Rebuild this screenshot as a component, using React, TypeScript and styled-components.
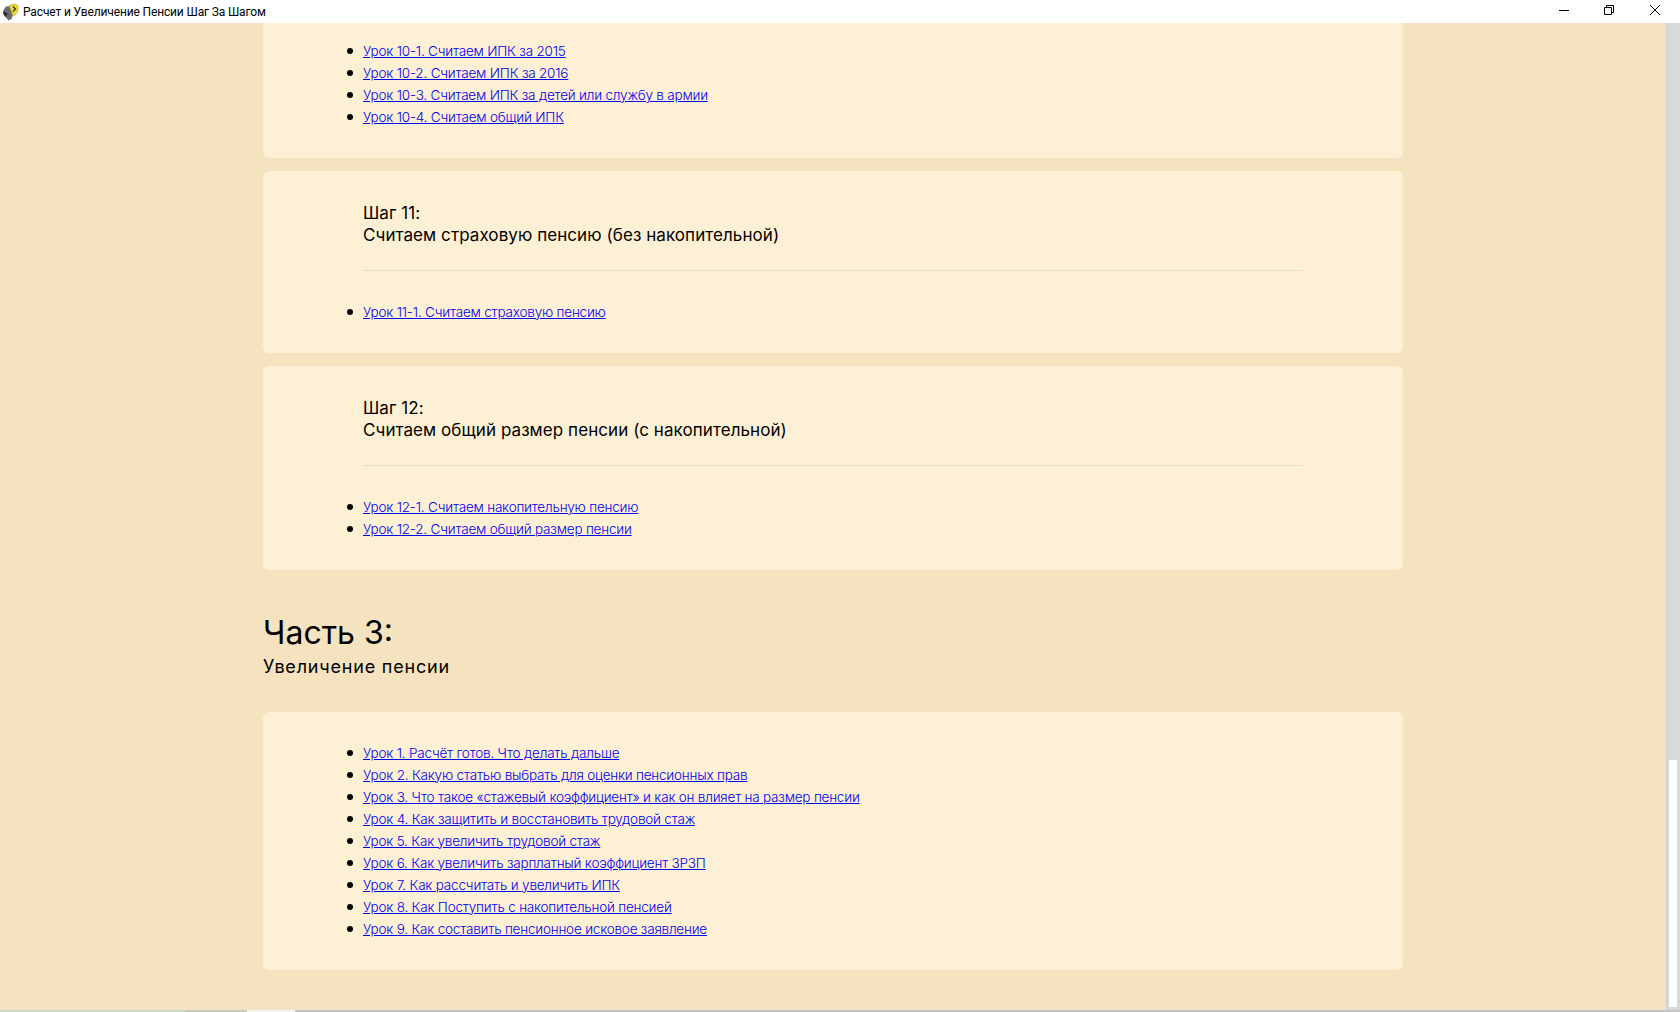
import React from "react";
import styled, { createGlobalStyle } from "styled-components";

const GlobalStyle = createGlobalStyle`
  html, body {
    margin: 0;
    padding: 0;
    height: 100%;
    overflow: hidden;
    background: #f5e3bf;
  }
`;

const Page = styled.div`
  width: 1680px;
  height: 1012px;
  display: flex;
  flex-direction: column;
  overflow: hidden;
  font-family: Inter, "Noto Sans", sans-serif;
`;

const TitleBar = styled.div`
  height: 23px;
  flex: none;
  background: #fff;
  display: flex;
  align-items: center;
  padding-left: 2px;
`;

const AppIcon = styled.svg`
  width: 17px;
  height: 19px;
  flex: none;
`;

const WindowTitle = styled.span`
  margin-left: 4px;
  flex: 1;
  font: 12px/20px Roboto, sans-serif;
  letter-spacing: -0.14px;
  color: #000;
  white-space: nowrap;
`;

const WindowButton = styled.svg<{ $gap: number }>`
  width: 10px;
  height: 10px;
  flex: none;
  margin-right: ${(p) => p.$gap}px;
  margin-top: -3px;
`;

const Middle = styled.div`
  flex: 1;
  min-height: 0;
  display: flex;
`;

const Content = styled.main`
  flex: 1;
  min-width: 0;
  padding-left: 263px;
`;

const Scrollbar = styled.div`
  width: 14px;
  flex: none;
  box-sizing: border-box;
  background: #d9d9d9;
  border-left: 2px solid #d0d3e0;
  padding: 737px 3px 3px 1px;
  display: flex;
`;

const Thumb = styled.div`
  flex: 1;
  background: #fff;
`;

const Card = styled.section`
  width: 1140px;
  box-sizing: border-box;
  background: #fef0d5;
  border-radius: 6px;
  padding: 0 100px;
  margin-bottom: 13px;
`;

const TopCard = styled(Card)`
  border-radius: 0 0 6px 6px;
  height: 135px;
  padding-top: 17px;
`;

const StepTitle = styled.h3`
  margin: 0;
  padding: 31px 0 24px;
  font-size: 17px;
  line-height: 22px;
  font-weight: 400;
  letter-spacing: 0.07px;
  color: #000;
  border-bottom: 1px solid #e8dfc9;
`;

const Lessons = styled.ul`
  margin: 0;
  padding: 30px 0 30px;
  list-style: none;
`;

const TopLessons = styled(Lessons)`
  padding: 0;
`;

const PlainLessons = styled(Lessons)`
  padding: 30px 0 30px;
`;

const Lesson = styled.li`
  position: relative;
  font-size: 13.5px;
  font-weight: 300;
  letter-spacing: -0.2px;
  line-height: 22px;
  &::before {
    content: "";
    position: absolute;
    left: -16px;
    top: 8px;
    width: 6px;
    height: 6px;
    border-radius: 50%;
    background: #000;
  }
  a {
    color: #0000ee;
    text-decoration: underline;
  }
`;

const PartHeader = styled.header`
  padding-top: 29px;
  padding-bottom: 32px;
`;

const PartTitle = styled.h2`
  margin: 0;
  font-size: 32px;
  line-height: 42px;
  font-weight: 400;
  color: #000;
`;

const PartSubtitle = styled.p`
  margin: 0;
  font-size: 18px;
  line-height: 26px;
  letter-spacing: 0.8px;
  color: #000;
`;

const Wallpaper = styled.div`
  height: 2px;
  flex: none;
  display: grid;
  grid-template-columns: 185px 62px 48px 1fr;
`;

const WallpaperPiece = styled.div<{ $color: string }>`
  background: ${(p) => p.$color};
`;

const lessonsTop = [
  "Урок 10-1. Считаем ИПК за 2015",
  "Урок 10-2. Считаем ИПК за 2016",
  "Урок 10-3. Считаем ИПК за детей или службу в армии",
  "Урок 10-4. Считаем общий ИПК",
];

const lessonsPart3 = [
  "Урок 1. Расчёт готов. Что делать дальше",
  "Урок 2. Какую статью выбрать для оценки пенсионных прав",
  "Урок 3. Что такое «стажевый коэффициент» и как он влияет на размер пенсии",
  "Урок 4. Как защитить и восстановить трудовой стаж",
  "Урок 5. Как увеличить трудовой стаж",
  "Урок 6. Как увеличить зарплатный коэффициент ЗРЗП",
  "Урок 7. Как рассчитать и увеличить ИПК",
  "Урок 8. Как Поступить с накопительной пенсией",
  "Урок 9. Как составить пенсионное исковое заявление",
];

const LessonItems: React.FC<{ items: string[] }> = ({ items }) => (
  <>
    {items.map((item) => (
      <Lesson key={item}>
        <a href="#">{item}</a>
      </Lesson>
    ))}
  </>
);

const App: React.FC = () => {
  return (
    <Page>
      <GlobalStyle />
      <TitleBar>
        <AppIcon viewBox="0 0 17 19">
          <path d="M1.5 8 L4 4.5 L7 4 L9 8 L11 13 L9.5 17 L6.5 18.5 L3.5 15 L1 11.5 Z" fill="#6a6c6e" />
          <path d="M2 9 L1 11.5 L3.5 15 L6 12 Z" fill="#2e3032" />
          <path d="M7.5 3.5 L12 2 L16 3.5 L16 8.5 L13.5 12.5 L11 14 L9.5 10 Z" fill="#f6dc34" stroke="#a4932a" strokeWidth="0.6" />
          <path d="M11 4.5 L13.5 7 L11 9.5" fill="none" stroke="#2e2e26" strokeWidth="1.2" />
        </AppIcon>
        <WindowTitle>Расчет и Увеличение Пенсии Шаг За Шагом</WindowTitle>
        <WindowButton $gap={35} viewBox="0 0 10 10">
          <path d="M0 5.5 H10" stroke="#000" fill="none" />
        </WindowButton>
        <WindowButton $gap={36} viewBox="0 0 10 10">
          <path d="M0.5 2.5 H7.5 V9.5 H0.5 Z M2.5 2.5 V0.5 H9.5 V7.5 H7.5" stroke="#000" fill="none" />
        </WindowButton>
        <WindowButton $gap={20} viewBox="0 0 10 10">
          <path d="M0 0 L10 10 M10 0 L0 10" stroke="#000" fill="none" />
        </WindowButton>
      </TitleBar>
      <Middle>
        <Content>
          <TopCard>
            <TopLessons>
              <LessonItems items={lessonsTop} />
            </TopLessons>
          </TopCard>
          <Card>
            <StepTitle>
              Шаг 11:
              <br />
              Считаем страховую пенсию (без накопительной)
            </StepTitle>
            <Lessons>
              <LessonItems items={["Урок 11-1. Считаем страховую пенсию"]} />
            </Lessons>
          </Card>
          <Card>
            <StepTitle>
              Шаг 12:
              <br />
              Считаем общий размер пенсии (с накопительной)
            </StepTitle>
            <Lessons>
              <LessonItems items={["Урок 12-1. Считаем накопительную пенсию", "Урок 12-2. Считаем общий размер пенсии"]} />
            </Lessons>
          </Card>
          <PartHeader>
            <PartTitle>Часть 3:</PartTitle>
            <PartSubtitle>Увеличение пенсии</PartSubtitle>
          </PartHeader>
          <Card>
            <PlainLessons>
              <LessonItems items={lessonsPart3} />
            </PlainLessons>
          </Card>
        </Content>
        <Scrollbar>
          <Thumb />
        </Scrollbar>
      </Middle>
      <Wallpaper>
        <WallpaperPiece $color="#c9d4c8" />
        <WallpaperPiece $color="#c9c9c4" />
        <WallpaperPiece $color="#f4f4f2" />
        <WallpaperPiece $color="#c4c4c2" />
      </Wallpaper>
    </Page>
  );
};

export default App;
